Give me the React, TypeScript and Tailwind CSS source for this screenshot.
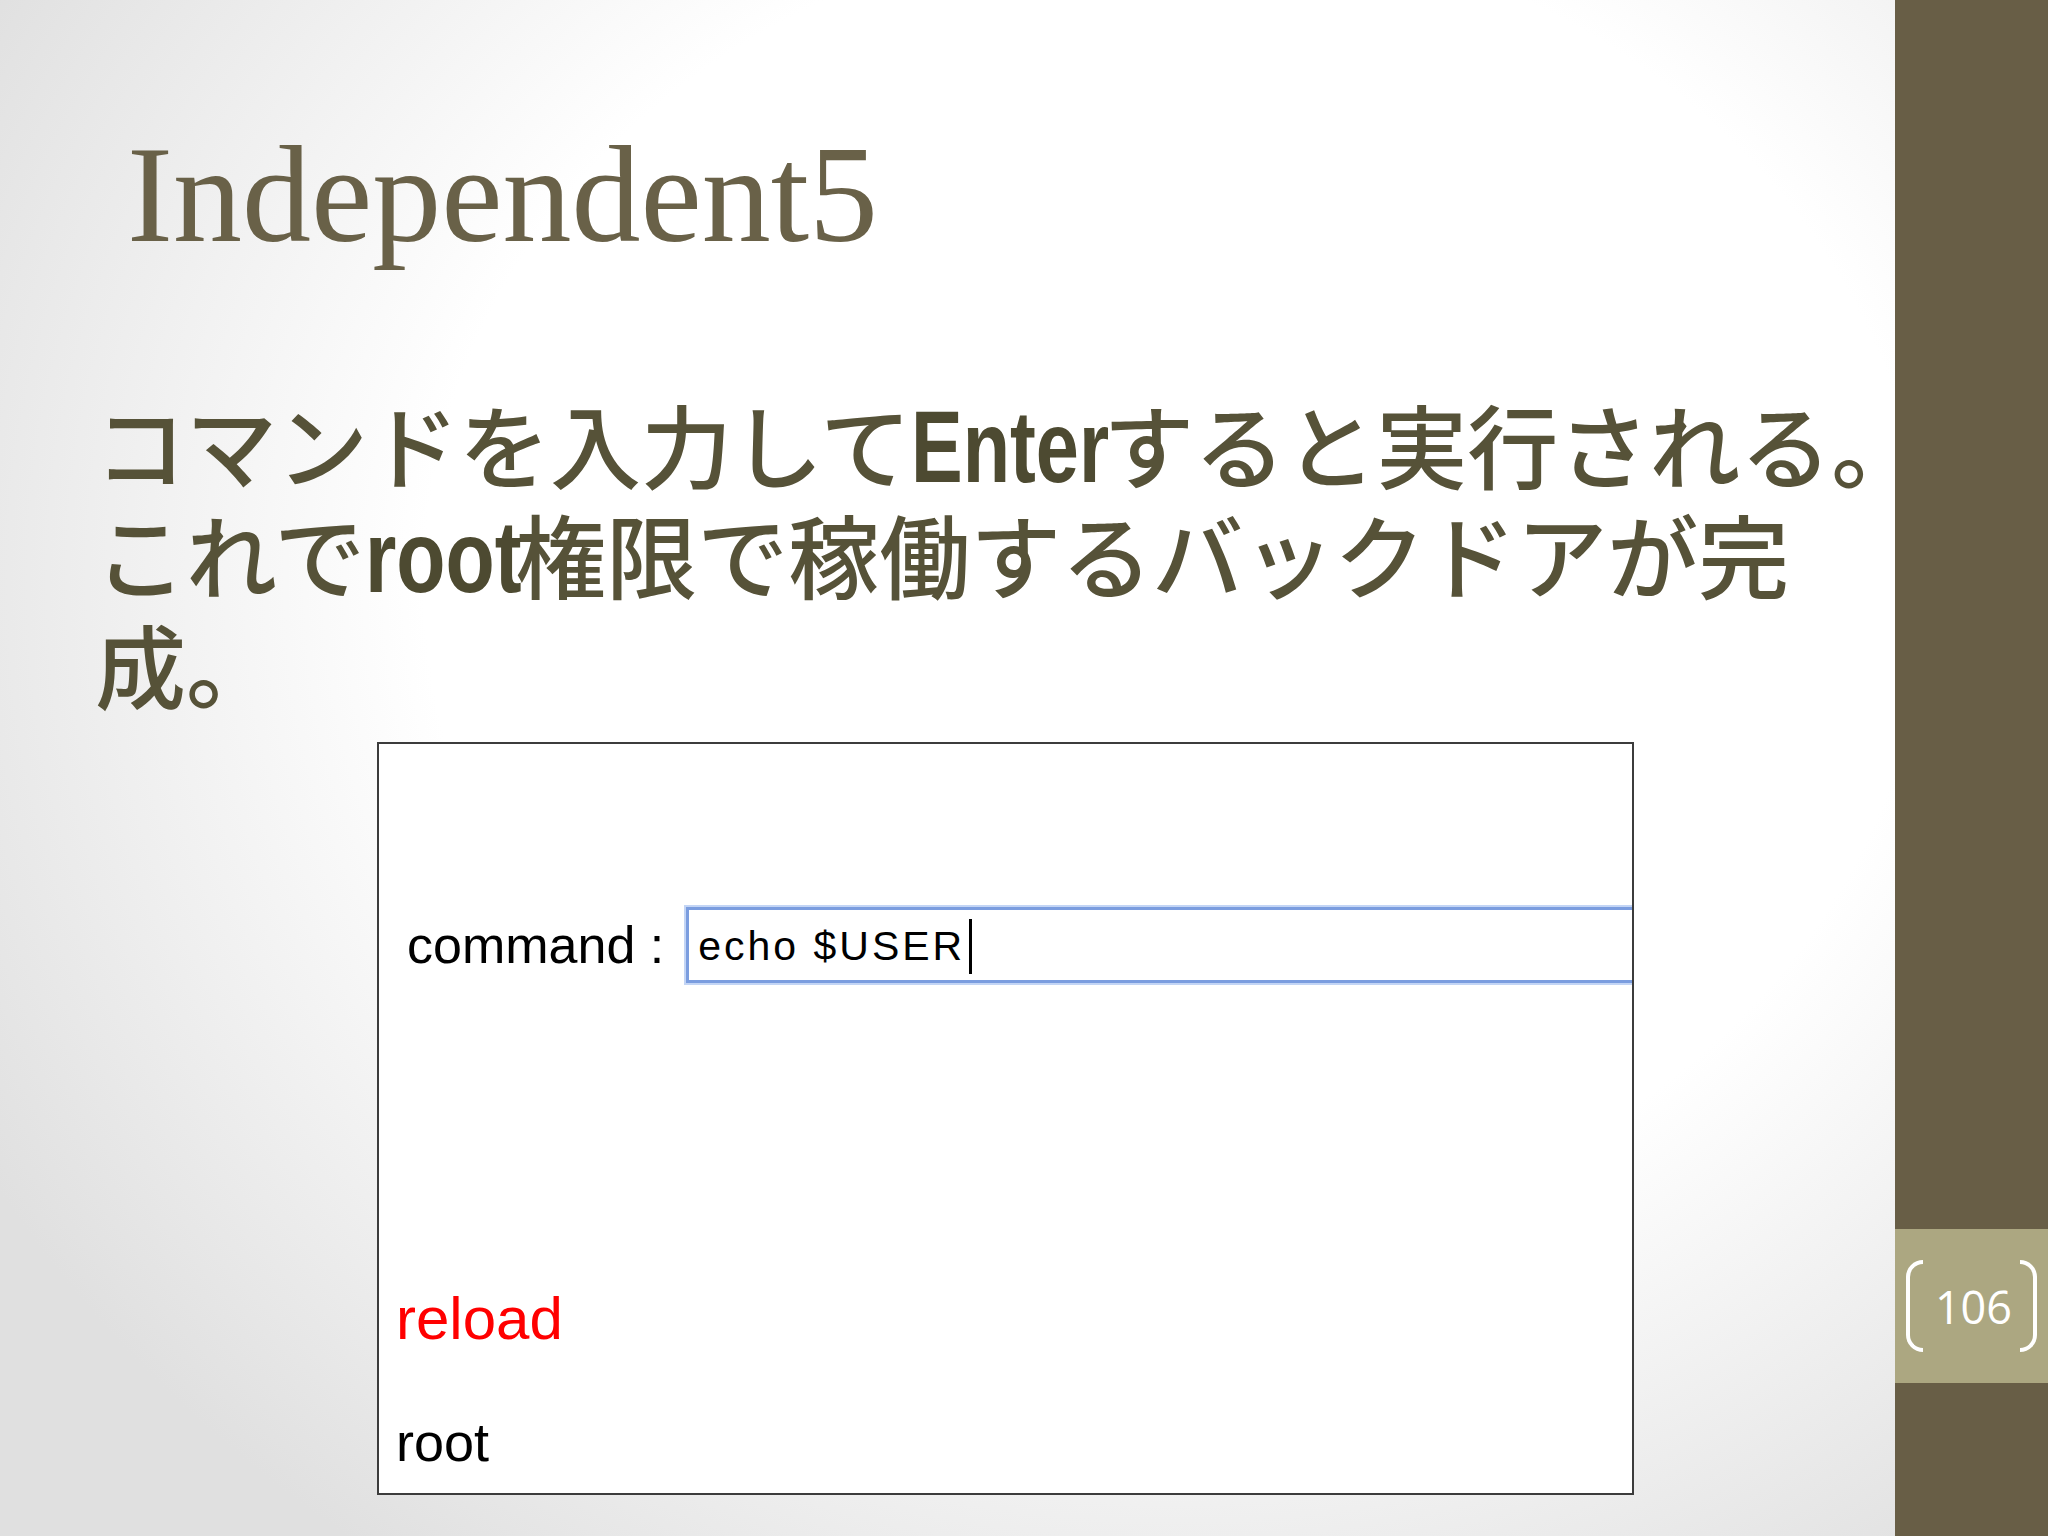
export default function App() {
  return (
    <div className="w-[2048px] h-[1536px] flex overflow-hidden">
      {/* Slide body */}
      <div className="w-[1895px] h-full shrink-0 flex flex-col bg-[radial-gradient(ellipse_72%_78%_at_62%_38%,#ffffff_55%,#e0e0e0_100%)]">
        <h1 className="pl-[127px] pt-[126px] text-[138px] leading-[138px] text-[#696148] font-['Liberation_Serif',serif] whitespace-nowrap">
          Independent5
        </h1>

        <div className="mt-[123px] pl-[95px] text-[91px] leading-[110px] font-[450] text-[#565238] font-['Noto_Sans_CJK_JP',sans-serif]">
          <div className="h-[110px] whitespace-nowrap">
            コマンドを入力して
            <Squeezed text="Enter" width="w-[192px]" scale="scale-x-[0.76]" />
            すると実行される。
          </div>
          <div className="h-[110px] whitespace-nowrap">
            これで
            <Squeezed text="root" width="w-[150px]" scale="scale-x-[0.79]" />
            権限で稼働するバックドアが完
          </div>
          <div className="h-[110px] whitespace-nowrap">成。</div>
        </div>

        {/* Screenshot of the web shell */}
        <div className="mt-[25px] ml-[377px] w-[1257px] h-[753px] shrink-0 border-2 border-[#3c3c3c] bg-white overflow-hidden flex flex-col font-['Liberation_Sans',sans-serif] text-black">
          <div className="mt-[161px] h-[80px] flex items-center pl-[28px]">
            <span className="text-[52px] leading-[52px] whitespace-nowrap">command :</span>
            <div className="ml-[22px] w-[1000px] h-[76px] shrink-0 border-[3px] border-[#7b9ddf] shadow-[0_0_0_2px_#c3d5f5] flex items-center pl-[9px] pt-[3px]">
              <span className="text-[41px] leading-none tracking-[3px] whitespace-nowrap">echo $USER</span>
              <span className="inline-block ml-[4px] w-[3px] h-[55px] bg-black" />
            </div>
          </div>
          <div className="mt-[304px] pl-[17px] text-[60px] leading-[60px] text-[#ff0000]">reload</div>
          <div className="mt-[66px] pl-[17px] text-[54px] leading-[54px]">root</div>
        </div>
      </div>

      {/* Right sidebar with page number */}
      <div className="w-[153px] h-full shrink-0 bg-[#685e46] flex flex-col pt-[1229px]">
        <div className="h-[154px] bg-[#aca781] flex items-center justify-center text-white">
          <div className="w-[17px] h-[92px] border-l-[4px] border-t-[4px] border-b-[4px] border-white rounded-l-[17px]" />
          <span className="ml-[12px] mr-[8px] text-[45px] leading-none font-['Open_Sans',sans-serif]">106</span>
          <div className="w-[17px] h-[92px] border-r-[4px] border-t-[4px] border-b-[4px] border-white rounded-r-[17px]" />
        </div>
      </div>
    </div>
  );
}

function Squeezed({ text, width, scale }: { text: string; width: string; scale: string }) {
  return (
    <span className={`inline-block ${width} align-baseline leading-[100px]`}>
      <span className={`inline-block origin-left ${scale} text-[102px] font-bold font-['Liberation_Sans',sans-serif] text-[#4d4a31]`}>
        {text}
      </span>
    </span>
  );
}
